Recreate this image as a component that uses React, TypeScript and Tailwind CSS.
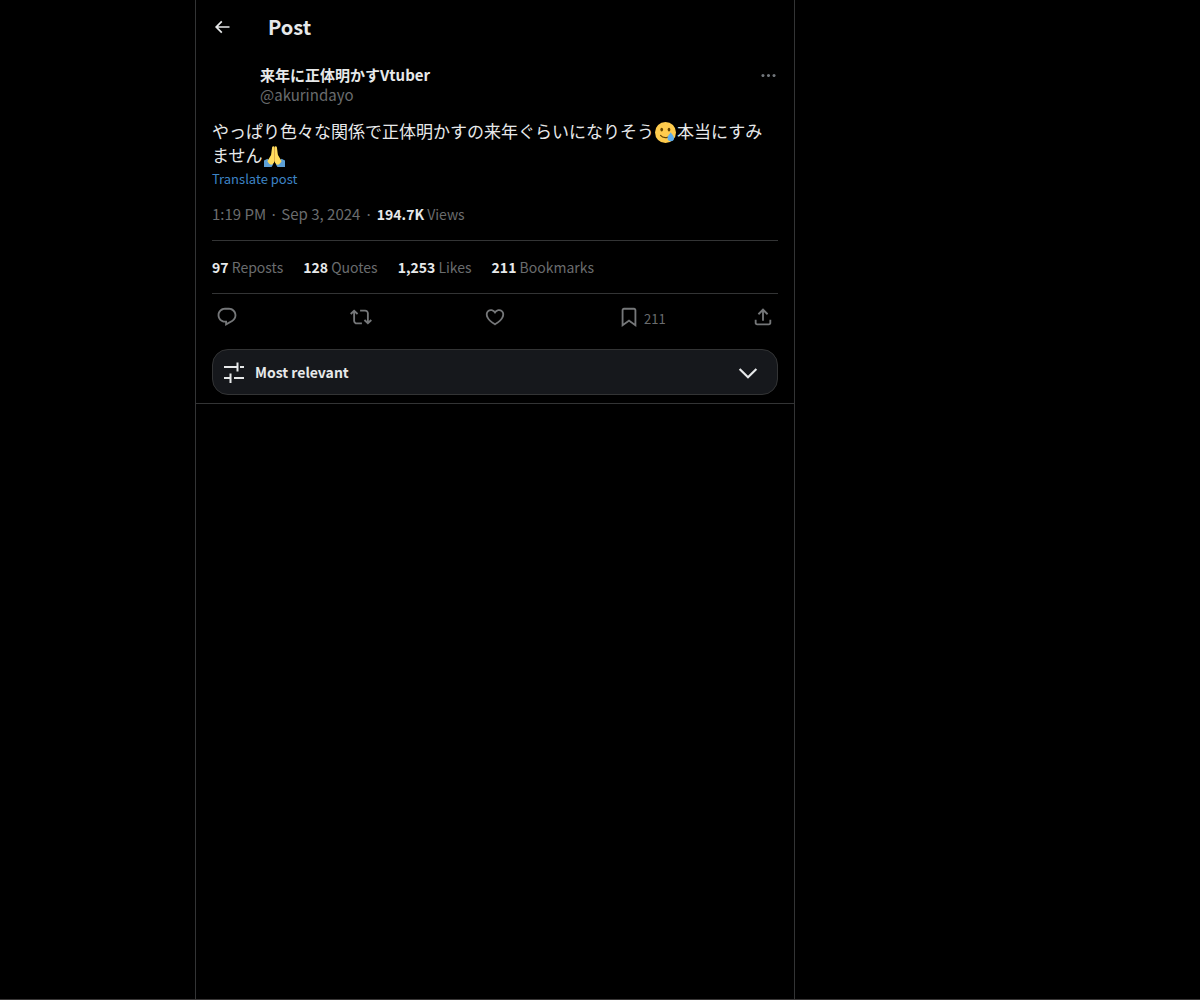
import React from "react";

const icons = {
  back: "M7.414 13l5.043 5.04-1.414 1.42L3.586 12l7.457-7.46 1.414 1.42L7.414 11H21v2H7.414z",
  more: "M3 12c0-1.1.9-2 2-2s2 .9 2 2-.9 2-2 2-2-.9-2-2zm9 2c1.1 0 2-.9 2-2s-.9-2-2-2-2 .9-2 2 .9 2 2 2zm7 0c1.1 0 2-.9 2-2s-.9-2-2-2-2 .9-2 2 .9 2 2 2z",
  reply:
    "M1.751 10c0-4.42 3.584-8 8.005-8h4.366c4.49 0 8.129 3.64 8.129 8.13 0 2.96-1.607 5.68-4.196 7.11l-8.054 4.46v-3.69h-.067c-4.49.1-8.183-3.51-8.183-8.01zm8.005-6c-3.317 0-6.005 2.69-6.005 6 0 3.37 2.77 6.08 6.138 6.01l.351-.01h1.761v2.3l5.087-2.81c1.951-1.08 3.163-3.13 3.163-5.36 0-3.39-2.744-6.13-6.129-6.13H9.756z",
  repost:
    "M4.5 3.88l4.432 4.14-1.364 1.46L5.5 7.55V16c0 1.1.896 2 2 2H13v2H7.5c-2.209 0-4-1.79-4-4V7.55L1.432 9.48.068 8.02 4.5 3.88zM16.5 6H11V4h5.5c2.209 0 4 1.79 4 4v8.45l2.068-1.93 1.364 1.46-4.432 4.14-4.432-4.14 1.364-1.46 2.068 1.93V8c0-1.1-.896-2-2-2z",
  like: "M16.697 5.5c-1.222-.06-2.679.51-3.89 2.16l-.805 1.09-.806-1.09C9.984 6.01 8.526 5.44 7.304 5.5c-1.243.07-2.349.78-2.91 1.91-.552 1.12-.633 2.78.479 4.82 1.074 1.97 3.257 4.27 7.129 6.61 3.87-2.34 6.052-4.64 7.126-6.61 1.111-2.04 1.03-3.7.477-4.82-.561-1.13-1.666-1.84-2.908-1.91zm4.187 7.69c-1.351 2.48-4.001 5.12-8.379 7.67l-.503.3-.504-.3c-4.379-2.55-7.029-5.19-8.382-7.67-1.36-2.5-1.41-4.86-.514-6.67.887-1.79 2.647-2.91 4.601-3.01 1.651-.09 3.368.56 4.798 2.01 1.429-1.45 3.146-2.1 4.796-2.01 1.954.1 3.714 1.22 4.601 3.01.896 1.81.846 4.17-.514 6.67z",
  bookmark:
    "M4 4.5C4 3.12 5.119 2 6.5 2h11C18.881 2 20 3.12 20 4.5v18.44l-8-5.71-8 5.71V4.5zM6.5 4c-.276 0-.5.22-.5.5v14.56l6-4.29 6 4.29V4.5c0-.28-.224-.5-.5-.5h-11z",
  share:
    "M12 2.59l5.7 5.7-1.41 1.42L13 6.41V16h-2V6.41l-3.3 3.3-1.41-1.42L12 2.59zM21 15l-.02 3.51c0 1.38-1.12 2.49-2.5 2.49H5.5C4.11 21 3 19.88 3 18.5V15h2v3.5c0 .28.22.5.5.5h12.98c.28 0 .5-.22.5-.5L19 15h2z",
  chevron: "M3.543 8.96l1.414-1.42L12 14.59l7.043-7.05 1.414 1.42L12 17.41 3.543 8.96z",
};

function Icon({ name, className }: { name: keyof typeof icons; className: string }) {
  return (
    <svg viewBox="0 0 24 24" fill="currentColor" aria-hidden="true" className={className}>
      <path d={icons[name]} />
    </svg>
  );
}

function SmilingTear() {
  return (
    <svg viewBox="0 0 36 36" role="img" aria-label="Smiling face with tear" className="mx-px inline-block size-[21px] align-[-5px]">
      <circle cx="18" cy="18" r="18" fill="#FFCC4D" />
      <ellipse cx="11.5" cy="13" rx="2.3" ry="3.3" fill="#664500" />
      <ellipse cx="24" cy="13" rx="2.3" ry="3.3" fill="#664500" />
      <path d="M9.500 23c2 2.600 4.500 3.800 8 3.800 1.500 0 3-.3 4-.8" fill="none" stroke="#664500" strokeWidth="2" strokeLinecap="round" />
      <path d="M27 17.500c-1 3-5.500 5.500-5.500 10a5.500 5.500 0 0 0 11 0c0-4.500-4.500-7-5.500-10z" fill="#5DADEC" />
    </svg>
  );
}

function FoldedHands() {
  return (
    <svg viewBox="0 0 36 36" role="img" aria-label="Folded hands" className="mx-px inline-block size-[21px] align-[-5px]">
      <path d="M0 25l6-3 10 9-3 5H0z" fill="#5C9FD6" />
      <path d="M36 25l-6-3-10 9 3 5h13z" fill="#5C9FD6" />
      <path d="M17.900 1.500c-.4-1.500-3.400-1.700-3.900.4-.6 3.600-1.200 9.300-1.900 13.600L6 25.500c-.6 1.500 4 7 6.500 6.500 3.500-1 5.400-3.500 5.500-6.500z" fill="#FFDC5D" />
      <path d="M18.100 1.500c.4-1.500 3.400-1.700 3.900.4.6 3.600 1.200 9.300 1.900 13.600L30 25.500c.6 1.500-4 7-6.500 6.500-3.500-1-5.400-3.500-5.500-6.500z" fill="#FFDC5D" />
      <path d="M18 3v23" fill="none" stroke="#F2B04E" strokeWidth="1" />
      <path d="M18 26.500l3 9.500h-6z" fill="#000" />
    </svg>
  );
}

function TuneIcon() {
  return (
    <svg viewBox="0 0 22 22" fill="none" stroke="currentColor" strokeWidth="2" aria-hidden="true" className="size-[22px]">
      <path d="M1 5h13M14.500 0.500v9M17 5h4M1 16h7M7.500 11.500v9.500M11 16h10" />
    </svg>
  );
}

const stats = [
  ["97", "Reposts"],
  ["128", "Quotes"],
  ["1,253", "Likes"],
  ["211", "Bookmarks"],
];

const actions: { name: keyof typeof icons; label: string; count?: string }[] = [
  { name: "reply", label: "Reply" },
  { name: "repost", label: "Repost" },
  { name: "like", label: "Like" },
  { name: "bookmark", label: "Bookmark", count: "211" },
];

export default function App() {
  return (
    <div className="flex min-h-screen flex-col border-b border-[#3a3838] bg-black pl-[195px] font-['Noto_Sans_CJK_JP',sans-serif] text-[15px] leading-5 text-[#e7e9ea]">
      <main className="w-full max-w-[600px] grow border-x border-[#333435]">
        <header className="flex h-[53px] items-center px-4">
          <button type="button" aria-label="Back" className="mr-9 flex size-5 items-center justify-center">
            <Icon name="back" className="size-5 shrink-0" />
          </button>
          <h1 className="text-xl leading-6 font-bold">Post</h1>
        </header>

        <article className="px-4 pt-3">
          <div className="flex items-start justify-between pl-12">
            <div>
              <h2 className="font-bold">来年に正体明かすVtuber</h2>
              <a href="#profile" className="block text-[#6a6c6e]">@akurindayo</a>
            </div>
            <button type="button" aria-label="More" className="flex h-5 items-center text-[#71767b]">
              <Icon name="more" className="size-[19px]" />
            </button>
          </div>

          <p lang="ja" className="mt-3.5 text-[17px] leading-6">
            やっぱり色々な関係で正体明かすの来年ぐらいになりそう
            <SmilingTear />
            本当にすみません
            <FoldedHands />
          </p>
          <button type="button" className="block text-[13px] leading-6 text-[#3d84c6]">Translate post</button>

          <div className="flex gap-1 pt-[13px] pb-4 text-[#6a6c6e]">
            <time>1:19 PM · Sep 3, 2024</time>
            <span>·</span>
            <span className="text-sm leading-5">
              <b className="text-[#e7e9ea]">194.7K</b> Views
            </span>
          </div>

          <div className="flex gap-5 border-y border-[#333435] py-4 text-sm leading-5 text-[#6a6c6e]">
            {stats.map(([count, label]) => (
              <a key={label} href="#stats">
                <b className="text-[#e7e9ea]">{count}</b> {label}
              </a>
            ))}
          </div>

          <div className="flex h-[46px] items-center px-1 text-[#757779]">
            {actions.map((a) => (
              <div key={a.name} className="flex-1">
                <button type="button" aria-label={a.label} className="flex items-center gap-1">
                  <Icon name={a.name} className="size-[22px] shrink-0" />
                  {a.count && <span className="pt-1 text-[13px] leading-[18px] text-[#6a6c6e]">{a.count}</span>}
                </button>
              </div>
            ))}
            <button type="button" aria-label="Share">
              <Icon name="share" className="size-[22px]" />
            </button>
          </div>

          <button
            type="button"
            className="mt-[9px] mb-2 flex h-[46px] w-full items-center gap-2.5 rounded-2xl border border-[#333435] bg-[#16181c] pr-4 pl-2.5 font-bold"
          >
            <span className="pt-0.5">
              <TuneIcon />
            </span>
            <span className="grow text-left text-sm">Most relevant</span>
            <span className="pt-0.5">
              <Icon name="chevron" className="size-[26px]" />
            </span>
          </button>
        </article>
        <hr className="border-[#333435]" />
      </main>
    </div>
  );
}
